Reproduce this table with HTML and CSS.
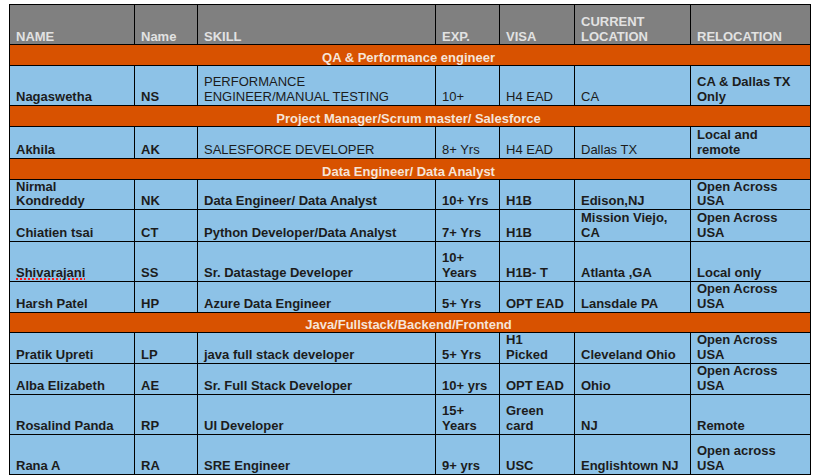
FILE: index.html
```html
<!DOCTYPE html>
<html>
<head>
<meta charset="utf-8">
<link rel="stylesheet" href="styles.css">
</head>
<body>
<div class="wrap">
<table class="grid">
  <colgroup>
    <col class="c1"><col class="c2"><col class="c3"><col class="c4"><col class="c5"><col class="c6"><col class="c7">
  </colgroup>
  <tr class="head h40">
    <td>NAME</td><td>Name</td><td>SKILL</td><td>EXP.</td><td>VISA</td><td>CURRENT LOCATION</td><td>RELOCATION</td>
  </tr>
  <tr class="sec h21"><td colspan="7">QA &amp; Performance engineer</td></tr>
  <tr class="h40">
    <td>Nagaswetha</td><td>NS</td><td class="r">PERFORMANCE ENGINEER/MANUAL TESTING</td><td class="r">10+</td><td class="r">H4 EAD</td><td class="r">CA</td><td>CA &amp; Dallas TX Only</td>
  </tr>
  <tr class="sec h21"><td colspan="7">Project Manager/Scrum master/ Salesforce</td></tr>
  <tr class="h32">
    <td>Akhila</td><td>AK</td><td class="r">SALESFORCE DEVELOPER</td><td class="r">8+ Yrs</td><td class="r">H4 EAD</td><td class="r">Dallas TX</td><td>Local and remote</td>
  </tr>
  <tr class="sec h21"><td colspan="7">Data Engineer/ Data Analyst</td></tr>
  <tr class="h30 tight">
    <td>Nirmal Kondreddy</td><td>NK</td><td>Data Engineer/ Data Analyst</td><td>10+ Yrs</td><td>H1B</td><td>Edison,NJ</td><td>Open Across USA</td>
  </tr>
  <tr class="h32">
    <td>Chiatien tsai</td><td>CT</td><td>Python Developer/Data Analyst</td><td>7+ Yrs</td><td>H1B</td><td>Mission Viejo, CA</td><td>Open Across USA</td>
  </tr>
  <tr class="h40">
    <td><span class="spell">Shivarajani</span></td><td>SS</td><td>Sr. Datastage Developer</td><td>10+ Years</td><td>H1B- T</td><td>Atlanta ,GA</td><td>Local only</td>
  </tr>
  <tr class="h31">
    <td>Harsh Patel</td><td>HP</td><td>Azure Data Engineer</td><td>5+ Yrs</td><td>OPT EAD</td><td>Lansdale PA</td><td>Open Across USA</td>
  </tr>
  <tr class="sec h20"><td colspan="7">Java/Fullstack/Backend/Frontend</td></tr>
  <tr class="h31">
    <td>Pratik Upreti</td><td>LP</td><td>java full stack developer</td><td>5+ Yrs</td><td>H1 Picked</td><td>Cleveland Ohio</td><td>Open Across USA</td>
  </tr>
  <tr class="h31">
    <td>Alba Elizabeth</td><td>AE</td><td>Sr. Full Stack Developer</td><td>10+ yrs</td><td>OPT EAD</td><td>Ohio</td><td>Open Across USA</td>
  </tr>
  <tr class="h40">
    <td>Rosalind Panda</td><td>RP</td><td>UI Developer</td><td>15+ Years</td><td>Green card</td><td>NJ</td><td>Remote</td>
  </tr>
  <tr class="h40">
    <td>Rana A</td><td>RA</td><td>SRE Engineer</td><td>9+ yrs</td><td>USC</td><td>Englishtown NJ</td><td>Open across USA</td>
  </tr>
</table>
</div>
</body>
</html>
```

FILE: styles.css
```css
html, body {
  margin: 0;
  padding: 0;
  background: #ffffff;
}
.wrap {
  padding: 4px 0 0 9px;
}
.grid {
  border-collapse: collapse;
  table-layout: fixed;
  width: 801px;
  font-family: "Liberation Sans", Arial, sans-serif;
  font-size: 13px;
  line-height: 14.5px;
  font-weight: bold;
  color: #1c1c1c;
}
.c1 { width: 125px; }
.c2 { width: 63px; }
.c3 { width: 238px; }
.c4 { width: 64px; }
.c5 { width: 75px; }
.c6 { width: 116px; }
.c7 { width: 120px; }
.grid td {
  border: 1px solid #000;
  background: #8dc2e7;
  vertical-align: bottom;
  padding: 0 9px 1px 6px;
  overflow: hidden;
}
.grid .r { font-weight: normal; }
.head td {
  background: #808080;
  color: #e2e2e2;
  padding-bottom: 0;
}
.sec td {
  background: #d85200;
  color: #f6e4d8;
  text-align: center;
  line-height: 14px;
  padding-bottom: 0;
}
.tight td { line-height: 14px; }
.h40 { height: 40px; }
.h32 { height: 32px; }
.h31 { height: 31px; }
.h30 { height: 30px; }
.h21 { height: 21px; }
.h20 { height: 20px; }
.spell {
  text-decoration-line: underline;
  text-decoration-style: dotted;
  text-decoration-color: #ff1a1a;
  text-decoration-thickness: 2px;
  text-underline-offset: 2px;
}
```
